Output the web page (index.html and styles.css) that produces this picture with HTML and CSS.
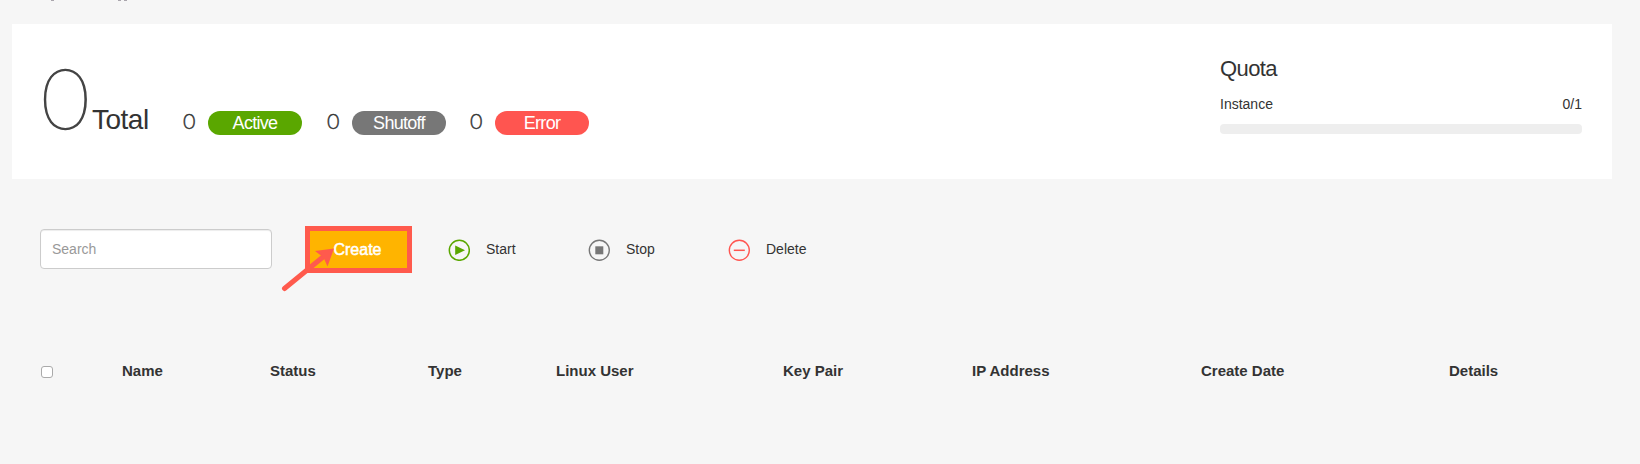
FILE: index.html
```
<!DOCTYPE html>
<html lang="en">
<head>
<meta charset="utf-8">
<title>Instances</title>
<link rel="stylesheet" href="styles.css">
</head>
<body>
<div class="crumbs"><i class="tail"></i><i class="tail tail-wide"></i><i class="tail tail-near"></i></div>
<section class="panel">
  <div class="summary">
    <span class="total-count">0</span>
    <span class="total-label">Total</span>
    <span class="count">0</span><span class="pill active">Active</span>
    <span class="count">0</span><span class="pill shutoff">Shutoff</span>
    <span class="count">0</span><span class="pill error">Error</span>
  </div>
  <div class="quota">
    <h2 class="quota-title">Quota</h2>
    <div class="quota-row"><span>Instance</span><span class="quota-value">0/1</span></div>
    <div class="bar"></div>
  </div>
</section>
<div class="toolbar">
  <input class="search" type="text" placeholder="Search">
  <div class="create-wrap">
    <button class="create">Create</button>
    <svg class="arrow" width="56" height="48" viewBox="280 246 56 48"><path d="M284.500 288.500L323 257" stroke="#ff5a4d" stroke-width="5" stroke-linecap="round"/><path d="M334 248.500L327.500 266.500L323.500 257.500L315 251Z" fill="#ff5a4d"/></svg>
  </div>
  <div class="action start"><svg width="22" height="22" viewBox="0 0 22 22"><circle cx="11.300" cy="11.300" r="10" fill="none" stroke="#5aa700" stroke-width="1.500"/><path d="M7.200 6.500L17 11.300L7.200 16.100Z" fill="#5aa700"/></svg><span>Start</span></div>
  <div class="action"><svg width="22" height="22" viewBox="0 0 22 22"><circle cx="11.300" cy="11.300" r="10" fill="none" stroke="#777" stroke-width="1.400"/><path d="M7.300 7.300h8v8h-8z" fill="#777"/></svg><span>Stop</span></div>
  <div class="action"><svg width="22" height="22" viewBox="0 0 22 22"><circle cx="11.300" cy="11.300" r="10" fill="none" stroke="#ff5550" stroke-width="1.400"/><path d="M5.800 11.300h11" stroke="#ff5550" stroke-width="1.500"/></svg><span>Delete</span></div>
</div>
<div class="thead">
  <span class="check"></span>
  <span>Name</span><span>Status</span><span>Type</span><span>Linux User</span><span>Key Pair</span><span>IP Address</span><span>Create Date</span><span>Details</span>
</div>
</body>
</html>
```
FILE: styles.css
```
* { box-sizing: border-box; }
body { margin: 0; height: 464px; overflow: hidden; background: #f6f6f6; color: #333; font: 14px/20px "Liberation Sans", Arial, sans-serif; }
.crumbs { height: 24px; padding-left: 51px; display: flex; }
.tail { width: 3px; height: 1px; background: #aaa6ad; }
.tail-wide { margin-left: 64px; }
.tail-near { margin-left: 3px; }
.panel { margin: 0 28px 0 12px; height: 155px; padding: 0 30px; background: #fff; display: flex; justify-content: space-between; }
.summary { display: flex; align-items: baseline; height: 155px; line-height: 30px; }
.total-count { width: 50px; margin-top: 43px; font: 100 84px/60px Lato, sans-serif; color: #333; -webkit-text-stroke: 1.4px #444; text-indent: -1px; }
.total-label { width: 91px; font-size: 28px; letter-spacing: -0.5px; }
.count { width: 25px; font: 300 21.5px/30px Lato, sans-serif; -webkit-text-stroke: 0.4px #333; }
.pill { width: 94px; height: 24px; margin-right: 25px; border-radius: 12px; color: #fff; font-size: 18px; line-height: 25px; letter-spacing: -0.7px; text-align: center; }
.active { background: #5aa700; }
.shutoff { background: #777; margin-right: 24px; }
.error { background: #ff5550; }
.quota { width: 362px; padding-top: 31px; }
.quota-title { margin: 0; font-size: 22px; font-weight: 400; line-height: 27px; letter-spacing: -0.6px; }
.quota-row { display: flex; justify-content: space-between; margin-top: 12px; line-height: 20px; letter-spacing: 0; }
.bar { height: 10px; margin-top: 10px; border-radius: 4px; background: #eee; }
.toolbar { display: flex; height: 47px; margin-top: 47px; padding-left: 40px; align-items: flex-start; }
.search { width: 232px; height: 40px; margin-top: 3px; padding: 0 11px; border: 1px solid #ccc; border-radius: 4px; background: #fff; box-shadow: inset 0 1px 1px rgba(0,0,0,.075); font: 14px "Liberation Sans", Arial, sans-serif; }
.search::placeholder { color: #999; }
.create-wrap { position: relative; margin-left: 33px; }
.create { display: block; width: 107px; height: 47px; padding: 0 2px 0 0; border: 5px solid #ff5a4d; background: #ffb400; color: #fff; font: 16px "Liberation Sans", Arial, sans-serif; -webkit-text-stroke: 0.5px #fff; }
.arrow { position: absolute; left: -25px; top: 20px; }
.action { display: flex; align-items: flex-start; width: 140px; padding-top: 13px; }
.start { margin-left: 36px; }
.action span { margin-left: 16px; line-height: 20px; }
.thead { display: grid; grid-template-columns: 81px 148px 158px 128px 227px 189px 229px 248px auto; margin-top: 88px; padding-left: 41px; font-size: 15px; font-weight: 700; line-height: 20px; white-space: nowrap; }
.check { width: 12px; height: 12px; margin-top: 5px; border: 1px solid #aaa; border-radius: 3px; background: #fff; }
```
